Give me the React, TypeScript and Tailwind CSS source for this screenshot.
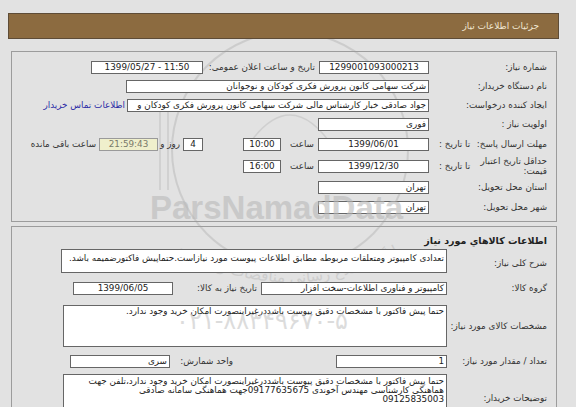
import React from "react";

function Box({
  className = "",
  children,
  center = false,
}: {
  className?: string;
  children?: React.ReactNode;
  center?: boolean;
}) {
  return (
    <div
      className={`h-[13px] shrink-0 bg-white border border-[#666] flex items-center px-[2px] text-[#222] whitespace-nowrap overflow-hidden ${
        center ? "justify-center" : "justify-start"
      } ${className}`}
    >
      {children}
    </div>
  );
}

function Label({ children }: { children?: React.ReactNode }) {
  return <div className="w-[127px] shrink-0 pr-[9px] text-[#333] whitespace-nowrap">{children}</div>;
}

function Label2({ children }: { children?: React.ReactNode }) {
  return <div className="w-[109px] shrink-0 pr-[9px] text-[#333] whitespace-nowrap">{children}</div>;
}

export default function App() {
  return (
    <div
      dir="rtl"
      className="relative w-[576px] h-[407px] overflow-hidden bg-[#e2e2e2] font-['DejaVu_Sans',sans-serif] text-[8.8px] leading-none text-[#333]"
    >
      {/* watermark (behind) */}
      <div className="pointer-events-none absolute inset-0 opacity-70">
        <svg width="576" height="407" className="absolute left-0 top-0">
          <circle cx="290" cy="150" r="118" fill="none" stroke="#c4c4c4" strokeWidth="2" />
          <path d="M160 100 L160 190 M168 100 L168 190" stroke="#c4c4c4" strokeWidth="1.5" />
          <path d="M245 150 Q290 80 335 150" fill="none" stroke="#c8c8c8" strokeWidth="1.5" />
          <path id="arcp" d="M165 245 Q290 320 415 245" fill="none" />
          <text fontSize="15" fill="#c6c6c6" fontFamily="DejaVu Sans, sans-serif">
            <textPath href="#arcp" startOffset="50%" textAnchor="middle">
              پایگاه اطلاع رسانی مناقصات و مزایده
            </textPath>
          </text>
        </svg>
      </div>

      {/* header */}
      <div className="relative mt-[13px] mr-[17px] ml-[8px] h-[26px] bg-[#8c6b40] border border-[#5e4c37] flex items-center pr-[19px] text-[#f1e7d2] text-[9px]">
        جزئیات اطلاعات نیاز
      </div>

      {/* panel 1 */}
      <div className="relative mt-[12px] mr-[19px] ml-[11px] border border-[#9c9c9c] pt-[6px] pb-[5px]">
        <div className="h-[18px] flex items-center">
          <Label>شماره نیاز:</Label>
          <Box className="w-[110px]" center>
            1299001093000213
          </Box>
          <div className="w-[116px] shrink-0 pr-[4px] whitespace-nowrap">تاریخ و ساعت اعلان عمومی:</div>
          <Box className="w-[112px]" center>
            <span dir="ltr">1399/05/27 - 11:50</span>
          </Box>
        </div>
        <div className="h-[20px] flex items-center">
          <Label>نام دستگاه خریدار:</Label>
          <Box className="w-[303px]">شرکت سهامی کانون پرورش فکری کودکان و نوجوانان</Box>
        </div>
        <div className="h-[19px] flex items-center">
          <Label>ایجاد کننده درخواست:</Label>
          <Box className="w-[302px]">جواد صادقی خبار کارشناس مالی شرکت سهامی کانون پرورش فکری کودکان و</Box>
          <div className="mr-[2px] text-[#2b2ba6] whitespace-nowrap">اطلاعات تماس خریدار</div>
        </div>
        <div className="h-[18px] flex items-center">
          <Label>اولویت نیاز :</Label>
          <Box className="w-[111px]">فوری</Box>
        </div>
        <div className="h-[22px] flex items-center">
          <div className="w-[127px] shrink-0 pr-[9px] pl-[10px] flex justify-between whitespace-nowrap">
            <span>مهلت ارسال پاسخ:</span>
            <span>تا تاریخ :</span>
          </div>
          <Box className="w-[111px]" center>
            1399/06/01
          </Box>
          <div className="w-[37px] shrink-0 pr-[4px]">ساعت</div>
          <Box className="w-[38px]" center>
            10:00
          </Box>
          <div className="w-[40px] shrink-0" />
          <Box className="w-[20px]" center>
            4
          </Box>
          <div className="w-[25px] shrink-0 pr-[3px] whitespace-nowrap">روز و</div>
          <Box className="w-[59px] !bg-[#efefcc] !border-[#9a9a9a] !text-[#7a7a6a]" center>
            21:59:43
          </Box>
          <div className="pr-[3px] whitespace-nowrap">ساعت باقی مانده</div>
        </div>
        <div className="h-[22px] flex items-center">
          <div className="w-[127px] shrink-0 pr-[9px] pl-[10px] flex justify-between items-center whitespace-nowrap">
            <div className="flex flex-col gap-[1px]">
              <span>حداقل تاریخ اعتبار</span>
              <span>قیمت:</span>
            </div>
            <span>تا تاریخ :</span>
          </div>
          <Box className="w-[111px]" center>
            1399/12/30
          </Box>
          <div className="w-[37px] shrink-0 pr-[4px]">ساعت</div>
          <Box className="w-[38px]" center>
            16:00
          </Box>
        </div>
        <div className="h-[21px] flex items-center">
          <Label>استان محل تحویل:</Label>
          <Box className="w-[111px]">تهران</Box>
        </div>
        <div className="h-[18px] flex items-center">
          <Label>شهر محل تحویل:</Label>
          <Box className="w-[111px]">تهران</Box>
        </div>
      </div>

      {/* panel 2 */}
      <div className="relative mt-[4px] mr-[19px] ml-[11px] border border-[#9c9c9c] pt-[6px] h-[200px]">
        <div className="h-[15px] flex items-center pr-[9px] font-bold text-[9.5px] text-[#222]">
          اطلاعات کالاهاي مورد نياز
        </div>
        <div className="mt-[1px] flex items-center">
          <Label2>
            <div className="pt-[4px]">شرح کلی نیاز:</div>
          </Label2>
          <div className="w-[386px] h-[24px] bg-white border border-[#666] px-[2px] pt-[4px] text-[#222] whitespace-nowrap overflow-hidden">
            تعدادی کامپیوتر ومتعلقات مربوطه مطابق اطلاعات پیوست مورد نیازاست.حتماپیش فاکتورضمیمه باشد.
          </div>
        </div>
        <div className="mt-[9px] flex items-center">
          <Label2>گروه کالا:</Label2>
          <Box className="w-[186px]">کامپیوتر و فناوری اطلاعات-سخت افزار</Box>
          <div className="w-[88px] shrink-0 pr-[4px] whitespace-nowrap">تاریخ نیاز به کالا:</div>
          <Box className="w-[100px]" center>
            1399/06/05
          </Box>
        </div>
        <div className="mt-[10px] flex items-center">
          <Label2>مشخصات کالای مورد نیاز:</Label2>
          <div className="w-[384px] h-[42px] bg-white border border-[#666] px-[2px] pt-[1px] text-[#222] whitespace-nowrap overflow-hidden">
            حتما پیش فاکتور با مشخصات دقیق پیوست باشددرغیراینصورت امکان خرید وجود ندارد.
          </div>
        </div>
        <div className="mt-[8px] flex items-center">
          <Label2>تعداد / مقدار مورد نیاز:</Label2>
          <Box className="w-[111px]">1</Box>
          <div className="w-[166px] shrink-0 pr-[103px] whitespace-nowrap">واحد شمارش:</div>
          <Box className="w-[100px]">سری</Box>
        </div>
        <div className="mt-[6px] flex items-start">
          <Label2>
            <div className="pt-[20px]">توضیحات خریدار:</div>
          </Label2>
          <div className="w-[384px] h-[40px] bg-white border border-[#666] px-[2px] pt-[2px] text-[#222] leading-[9px] whitespace-nowrap overflow-hidden">
            <div>حتما پیش فاکتور با مشخصات دقیق پیوست باشددرغیراینصورت امکان خرید وجود ندارد،تلفن جهت</div>
            <div>هماهنگی کارشناسی مهندس آخوندی 09177635675جهت هماهنگی سامانه صادقی</div>
            <div>09125835003</div>
          </div>
        </div>
      </div>

      {/* watermark text (over) */}
      <div className="pointer-events-none absolute inset-0 opacity-60">
        <div
          className="absolute left-[150px] top-[191px] font-['Liberation_Sans',sans-serif] font-bold text-[33px] leading-none text-[#b9b9b9]"
          dir="ltr"
        >
          ParsNamadData
        </div>
        <div
          className="absolute left-[176px] top-[309px] font-['DejaVu_Sans',sans-serif] text-[24px] leading-none text-[#c6c6c6]"
          dir="ltr"
        >
          ۰۲۱-۸۸۳۴۹۶۷۰-۵
        </div>
      </div>
    </div>
  );
}
